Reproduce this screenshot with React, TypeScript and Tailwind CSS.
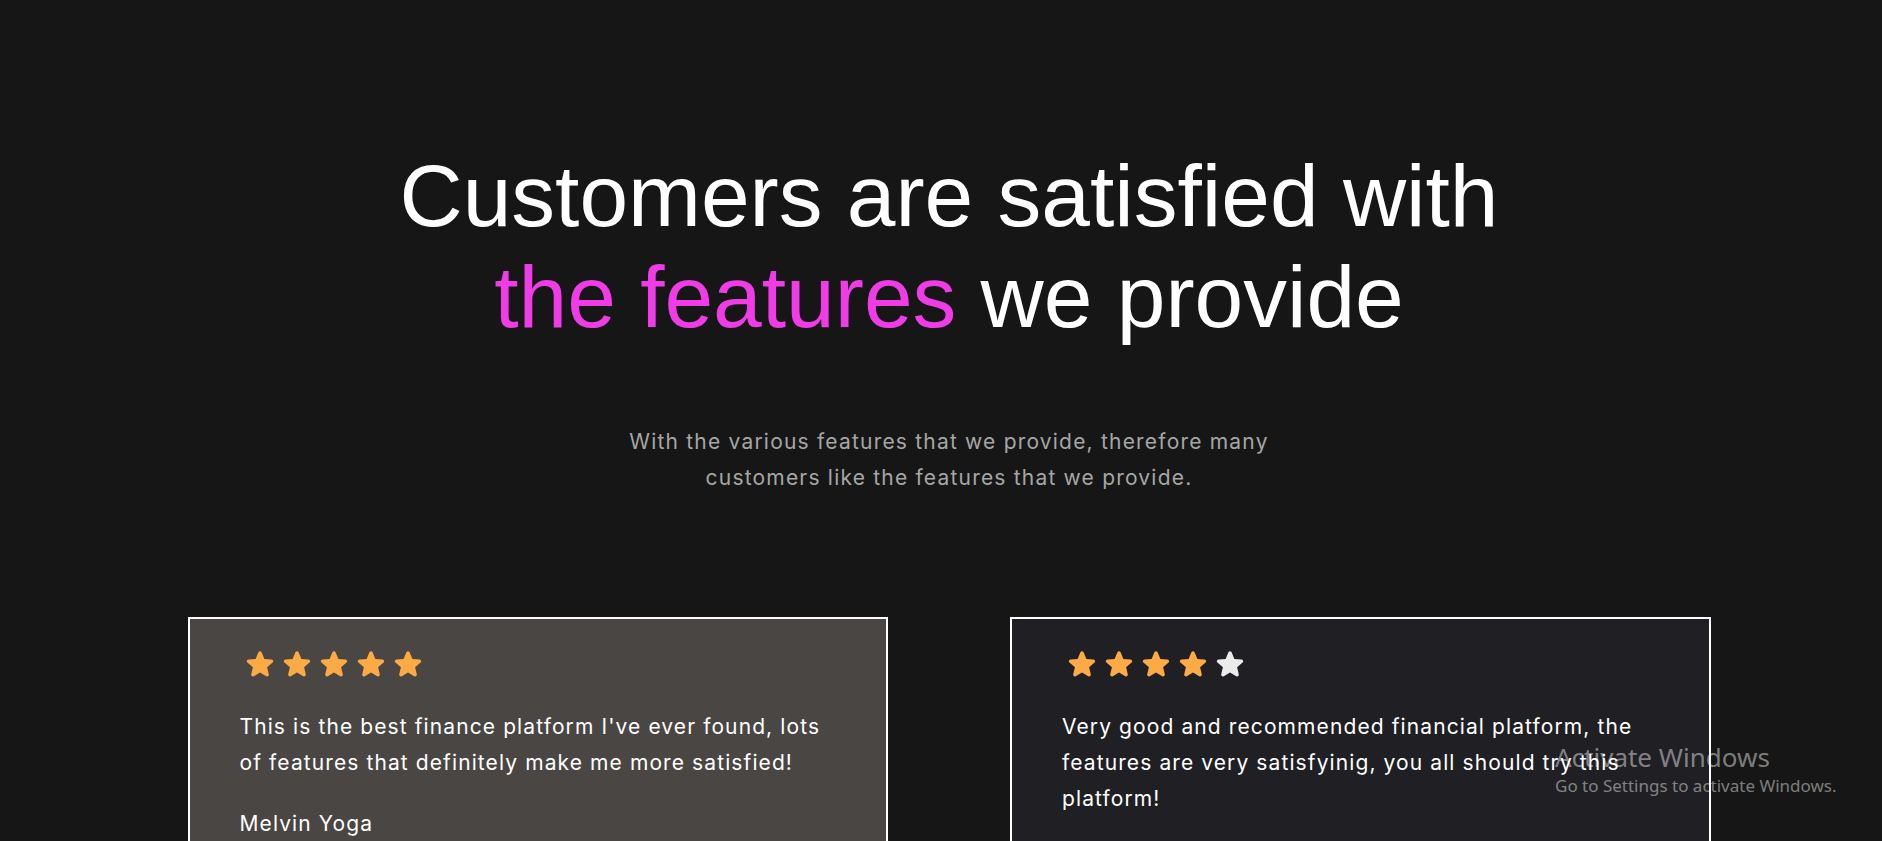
import React from "react"

interface reviewItem {
  rating: number,
  lines: string[],
  name: string,
  bg: string
}

const reviews: reviewItem[] = [
  {
    rating: 5,
    lines: ["This is the best finance platform I've ever found, lots", "of features that definitely make me more satisfied!"],
    name: "Melvin Yoga",
    bg: "bg-[#4a4643]"
  },
  {
    rating: 4,
    lines: ["Very good and recommended financial platform, the", "features are very satisfyinig, you all should try this", "platform!"],
    name: "Rizky Pratama",
    bg: "bg-[#1f1f24]"
  }
]

function Star({ filled }: { filled: boolean }) {
  return (
    <svg viewBox="0 0 24 24" className={filled ? "w-8 h-8 text-[#fbaa45]" : "w-8 h-8 text-[#ebebeb]"} fill="currentColor">
      <path
        fillRule="evenodd"
        clipRule="evenodd"
        d="M10.788 3.21c.448-1.077 1.976-1.077 2.424 0l2.082 5.006 5.404.434c1.164.093 1.636 1.545.749 2.305l-4.117 3.527 1.257 5.273c.271 1.136-.964 2.033-1.96 1.425L12 18.354 7.373 21.18c-.996.608-2.231-.29-1.96-1.425l1.257-5.273-4.117-3.527c-.887-.76-.415-2.212.749-2.305l5.404-.434 2.082-5.005Z"
      />
    </svg>
  )
}

function ReviewCard({ rating, lines, name, bg }: reviewItem) {
  return (
    <div className={`${bg} border-2 border-white px-[50px] pt-[29px] pb-16 text-white`}>
      <div className="flex gap-[5px] ml-1">
        {[1, 2, 3, 4, 5].map((n) => (
          <Star key={n} filled={n <= rating} />
        ))}
      </div>
      <p className="mt-[29px] text-[21px] leading-[36px] tracking-[1.1px]">
        {lines.map((l) => (
          <span key={l} className="block whitespace-nowrap">{l}</span>
        ))}
      </p>
      <div className="mt-[25px] text-[21px] leading-[36px] tracking-[1.1px]">{name}</div>
    </div>
  )
}

export default function App() {
  return (
    <div className="relative h-[841px] overflow-hidden bg-[#161616] pl-4 font-['Inter',sans-serif]">
      <div className="pt-[146px] text-center">
        <h1 className="text-[87.5px] leading-[101px] text-white font-['Liberation_Sans',Arial,sans-serif]">
          Customers are satisfied with
          <br />
          <span className="text-[#ef3ce6]">the features</span> we provide
        </h1>
        <p className="mt-[76px] text-[21px] leading-[36px] tracking-[1.2px] text-[#a6a6a6]">
          With the various features that we provide, therefore many
          <br />
          customers like the features that we provide.
        </p>
      </div>

      <div className="mx-auto mt-[121px] grid w-[1523px] grid-cols-2 gap-[122px]">
        {reviews.map((r) => (
          <ReviewCard key={r.name} {...r} />
        ))}
      </div>

      <div className="pointer-events-none absolute left-[1555px] top-[740px] text-[#ffffff]/45 font-['Noto_Sans',sans-serif]">
        <div className="text-[26px] leading-[34px]">Activate Windows</div>
        <div className="text-[17px] leading-[24px]">Go to Settings to activate Windows.</div>
      </div>
    </div>
  )
}
